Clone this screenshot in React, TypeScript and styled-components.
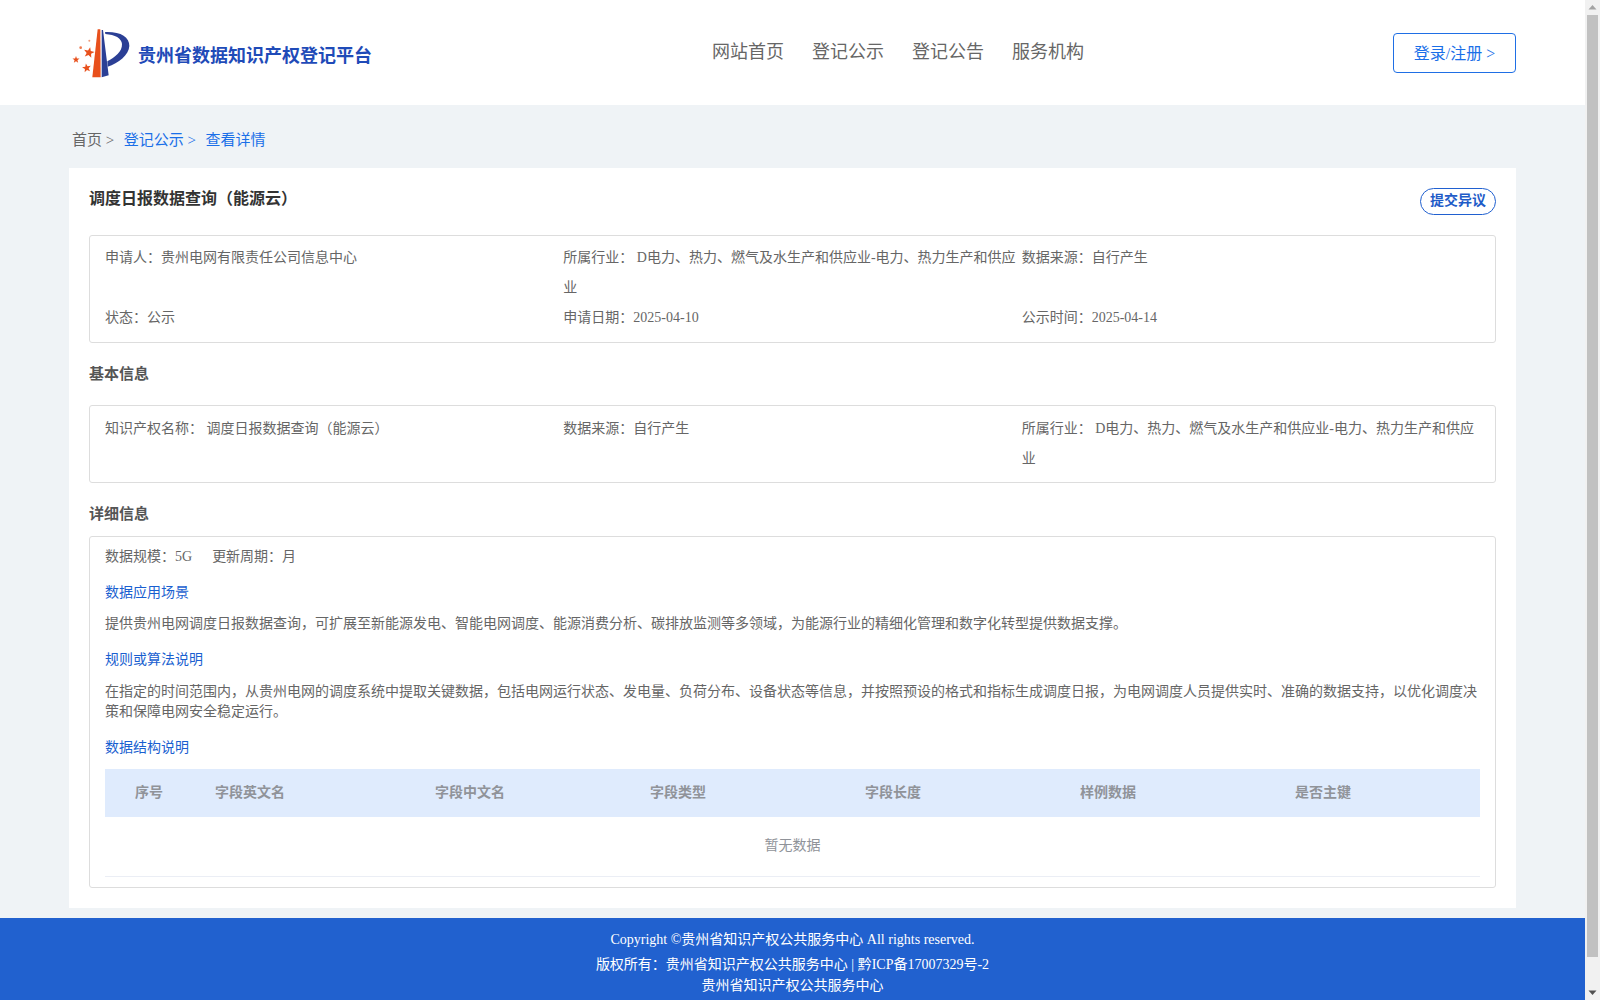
import React from "react";
import styled, { createGlobalStyle } from "styled-components";

const GlobalStyle = createGlobalStyle`
  body {
    margin: 0;
    background: #eff3f6;
    font-family: "Liberation Serif", "Noto Sans CJK SC", serif;
    font-size: 14px;
    color: #666;
  }
`;

const Page = styled.div`
  padding-right: 15px;
  background: #eff3f6;
`;

const ScrollTrack = styled.aside`
  position: fixed;
  top: 0;
  right: 0;
  width: 15px;
  height: 100vh;
  background: #f1f1f1;
  display: flex;
  flex-direction: column;
  align-items: center;
  z-index: 10;
`;

const ScrollArrow = styled.svg`
  width: 15px;
  height: 15px;
  flex: none;
`;

const ScrollThumb = styled.div`
  width: 11px;
  height: 942px;
  flex: none;
  background: #c1c1c1;
`;

const ScrollRest = styled.div`
  flex: 1;
`;

const Header = styled.header`
  height: 105px;
  background: #fff;
  display: flex;
  align-items: center;
  padding: 0 69px 0 72px;
`;

const Brand = styled.div`
  width: 640px;
  display: flex;
  align-items: center;
  gap: 6px;
  padding-top: 3px;
`;

const BrandName = styled.span`
  font-family: "Noto Sans CJK SC", sans-serif;
  font-size: 18px;
  font-weight: 700;
  color: #1f4bb8;
  white-space: nowrap;
`;

const Nav = styled.nav`
  flex: 1;
  display: flex;
  gap: 28px;
  margin-bottom: 5px;
`;

const NavLink = styled.a`
  font-size: 18px;
  color: #666;
`;

const LoginButton = styled.button`
  width: 123px;
  height: 40px;
  border: 1px solid #1f6fe5;
  border-radius: 4px;
  background: #fff;
  color: #1a6fe8;
  font-family: inherit;
  font-size: 16px;
  padding: 0 0 2px;
`;

const Main = styled.main`
  margin: 0 69px;
`;

const Breadcrumb = styled.div`
  height: 60px;
  padding: 3px 0 0 3px;
  display: flex;
  align-items: center;
  font-size: 15px;
`;

const Crumb = styled.a<{ $active?: boolean }>`
  color: ${(p) => (p.$active ? "#1a6fe8" : "#666")};
  margin-right: 9.5px;
`;

const Card = styled.section`
  background: #fff;
  padding: 20px 20px 20px;
`;

const TitleRow = styled.div`
  height: 27px;
  display: flex;
  justify-content: space-between;
  align-items: flex-start;
  margin-bottom: 20px;
`;

const Title = styled.h1`
  margin: 0;
  font-size: 16px;
  line-height: 22px;
  font-weight: 700;
  color: #333;
`;

const ObjectionButton = styled.button`
  width: 76px;
  height: 27px;
  border: 1px solid #2060d0;
  border-radius: 14px;
  background: #fff;
  color: #1f5cc8;
  font-family: inherit;
  font-size: 14px;
  font-weight: 700;
  padding: 0 0 5px;
`;

const Box = styled.div<{ $bottom: number; $top: number }>`
  border: 1px solid #ddd;
  border-radius: 3px;
  padding: ${(p) => p.$top}px 15px ${(p) => p.$bottom}px;
`;

const InfoGrid = styled.div`
  display: grid;
  grid-template-columns: repeat(3, 1fr);
  line-height: 30px;
`;

const InfoItem = styled.div`
  font-size: 14px;
  color: #666;
`;

const SectionHeading = styled.h2<{ $tall?: boolean }>`
  margin: 0;
  font-size: 15px;
  font-weight: 700;
  color: #555;
  line-height: ${(p) => (p.$tall ? 62 : 44)}px;
  padding-top: ${(p) => (p.$tall ? 0 : 9)}px;
`;

const MetaLine = styled.div`
  display: flex;
  gap: 20px;
  line-height: 20px;
`;

const SubHeading = styled.h3<{ $top: number }>`
  margin: ${(p) => p.$top}px 0 0;
  font-size: 14px;
  font-weight: 400;
  line-height: 20px;
  color: #1a5fd0;
`;

const Paragraph = styled.p<{ $top: number }>`
  margin: ${(p) => p.$top}px 0 0;
  font-size: 14px;
  line-height: 20px;
  color: #666;
`;

const TableHead = styled.div`
  margin-top: 11px;
  height: 48px;
  box-sizing: border-box;
  padding-bottom: 4px;
  background: #dfebfd;
  display: grid;
  grid-template-columns: 110px 220px 215px 215px 215px 215px 1fr;
  align-items: center;
  font-weight: 700;
  color: #909399;
`;

const HeadCell = styled.div<{ $first?: boolean }>`
  padding-left: ${(p) => (p.$first ? 30 : 0)}px;
`;

const EmptyRow = styled.div`
  height: 60px;
  box-sizing: border-box;
  padding-bottom: 6px;
  border-bottom: 1px solid #ebeef5;
  display: flex;
  align-items: center;
  justify-content: center;
  color: #909399;
`;

const Footer = styled.footer`
  margin-top: 10px;
  height: 112px;
  box-sizing: border-box;
  background: #2161cf;
  padding-top: 12px;
  color: #fff;
  text-align: center;
`;

const FooterLine = styled.div<{ $top?: number }>`
  line-height: 20px;
  margin-top: ${(p) => p.$top ?? 0}px;
`;

const starPoints = (cx: number, cy: number, r: number, rotate: number) =>
  Array.from({ length: 10 }, (_, i) => {
    const radius = i % 2 === 0 ? r : r * 0.42;
    const angle = ((rotate - 90 + i * 36) * Math.PI) / 180;
    return `${(cx + radius * Math.cos(angle)).toFixed(1)},${(cy + radius * Math.sin(angle)).toFixed(1)}`;
  }).join(" ");

const Logo = () => (
  <svg width="60" height="52" viewBox="21 24 180 156" aria-hidden="true">
    <polygon points="98,28 106,28 107,172 82,172" fill="#e8501c" />
    <polygon points="110,30 114,30 131,166 110,172" fill="#2b3f95" />
    <path
      d="M120,36 C165,34 194,50 193,78 C192,105 160,130 128,140 L127,124 C150,112 172,95 171,72 C170,55 150,44 121,42 Z"
      fill="#2b3f95"
    />
    <polygon points={starPoints(72, 98, 17, 12)} fill="#e8501c" />
    <polygon points={starPoints(33, 119, 11, 0)} fill="#e8501c" />
    <polygon points={starPoints(65, 144, 14, -10)} fill="#e8501c" />
    <circle cx="47" cy="83" r="4" fill="#ee7a50" />
    <circle cx="73" cy="62" r="3" fill="#f09a7a" />
  </svg>
);

const columns = ["序号", "字段英文名", "字段中文名", "字段类型", "字段长度", "样例数据", "是否主键"];

export default function App() {
  return (
    <Page>
      <GlobalStyle />
      <ScrollTrack aria-hidden="true">
        <ScrollArrow viewBox="0 0 15 15">
          <path d="M3.5 9.5 L7.5 5 L11.5 9.5 Z" fill="#a3a3a3" />
        </ScrollArrow>
        <ScrollThumb />
        <ScrollRest />
        <ScrollArrow viewBox="0 0 15 15">
          <path d="M3.5 5.5 L7.5 10 L11.5 5.5 Z" fill="#505050" />
        </ScrollArrow>
      </ScrollTrack>
      <Header>
        <Brand>
          <Logo />
          <BrandName>贵州省数据知识产权登记平台</BrandName>
        </Brand>
        <Nav>
          <NavLink>网站首页</NavLink>
          <NavLink>登记公示</NavLink>
          <NavLink>登记公告</NavLink>
          <NavLink>服务机构</NavLink>
        </Nav>
        <LoginButton>登录/注册 &gt;</LoginButton>
      </Header>
      <Main>
        <Breadcrumb>
          <Crumb>首页 &gt;</Crumb>
          <Crumb $active>登记公示 &gt;</Crumb>
          <Crumb $active>查看详情</Crumb>
        </Breadcrumb>
        <Card>
          <TitleRow>
            <Title>调度日报数据查询（能源云）</Title>
            <ObjectionButton>提交异议</ObjectionButton>
          </TitleRow>
          <Box $top={7} $bottom={9}>
            <InfoGrid>
              <InfoItem>申请人：贵州电网有限责任公司信息中心</InfoItem>
              <InfoItem>所属行业： D电力、热力、燃气及水生产和供应业-电力、热力生产和供应业</InfoItem>
              <InfoItem>数据来源：自行产生</InfoItem>
              <InfoItem>状态：公示</InfoItem>
              <InfoItem>申请日期：2025-04-10</InfoItem>
              <InfoItem>公示时间：2025-04-14</InfoItem>
            </InfoGrid>
          </Box>
          <SectionHeading $tall>基本信息</SectionHeading>
          <Box $top={8} $bottom={8}>
            <InfoGrid>
              <InfoItem>知识产权名称： 调度日报数据查询（能源云）</InfoItem>
              <InfoItem>数据来源：自行产生</InfoItem>
              <InfoItem>所属行业： D电力、热力、燃气及水生产和供应业-电力、热力生产和供应业</InfoItem>
            </InfoGrid>
          </Box>
          <SectionHeading>详细信息</SectionHeading>
          <Box $top={10} $bottom={10}>
            <MetaLine>
              <span>数据规模：5G</span>
              <span>更新周期：月</span>
            </MetaLine>
            <SubHeading $top={16}>数据应用场景</SubHeading>
            <Paragraph $top={11}>
              提供贵州电网调度日报数据查询，可扩展至新能源发电、智能电网调度、能源消费分析、碳排放监测等多领域，为能源行业的精细化管理和数字化转型提供数据支撑。
            </Paragraph>
            <SubHeading $top={16}>规则或算法说明</SubHeading>
            <Paragraph $top={12}>
              在指定的时间范围内，从贵州电网的调度系统中提取关键数据，包括电网运行状态、发电量、负荷分布、设备状态等信息，并按照预设的格式和指标生成调度日报，为电网调度人员提供实时、准确的数据支持，以优化调度决策和保障电网安全稳定运行。
            </Paragraph>
            <SubHeading $top={16}>数据结构说明</SubHeading>
            <TableHead>
              {columns.map((c, i) => (
                <HeadCell key={c} $first={i === 0}>
                  {c}
                </HeadCell>
              ))}
            </TableHead>
            <EmptyRow>暂无数据</EmptyRow>
          </Box>
        </Card>
      </Main>
      <Footer>
        <FooterLine>Copyright ©贵州省知识产权公共服务中心 All rights reserved.</FooterLine>
        <FooterLine $top={5}>版权所有：贵州省知识产权公共服务中心 | 黔ICP备17007329号-2</FooterLine>
        <FooterLine $top={1}>贵州省知识产权公共服务中心</FooterLine>
      </Footer>
    </Page>
  );
}
